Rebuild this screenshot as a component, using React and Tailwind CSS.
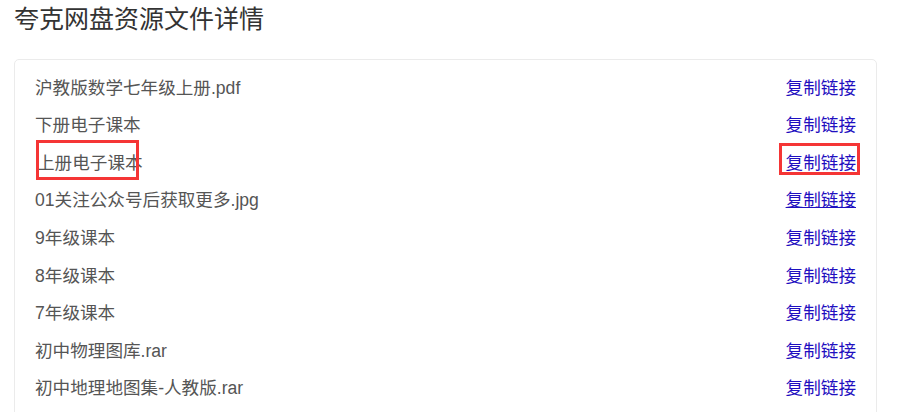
import React from 'react';

const files = [
  '沪教版数学七年级上册.pdf',
  '下册电子课本',
  '上册电子课本',
  '01关注公众号后获取更多.jpg',
  '9年级课本',
  '8年级课本',
  '7年级课本',
  '初中物理图库.rar',
  '初中地理地图集-人教版.rar',
];

export default function App() {
  return (
    <div
      className="w-[905px] h-[412px] overflow-hidden bg-white"
      style={{ fontFamily: '"Liberation Sans", "Noto Sans CJK SC", sans-serif' }}
    >
      <h1 className="pl-[14px] pt-[3px] text-[25px] leading-[32px] text-[#333] font-normal">
        夸克网盘资源文件详情
      </h1>
      <div className="mt-[24px] ml-[14px] w-[863px] border border-[#ebebeb] rounded-[5px] pt-[9px] pl-[20px] pr-[20px] pb-4">
        {files.map((name, i) => (
          <div key={i} className="h-[37.6px] flex items-center justify-between text-[17.6px]">
            <span className={`relative text-[#555] ${i === 2 ? 'pl-[2px]' : ''}`}>
              {name}
              {i === 2 && (
                <span className="absolute left-[1px] top-[-10px] w-[103px] h-[40px] border-[3px] border-[#f53535]" />
              )}
            </span>
            <a
              href="#"
              className={`relative text-[#1f0fc0] ${i === 3 ? 'underline' : 'no-underline'}`}
            >
              复制链接
              {i === 2 && (
                <span className="absolute left-[-7px] top-[-7px] w-[81px] h-[32px] border-[3px] border-[#f53535]" />
              )}
            </a>
          </div>
        ))}
      </div>
    </div>
  );
}
